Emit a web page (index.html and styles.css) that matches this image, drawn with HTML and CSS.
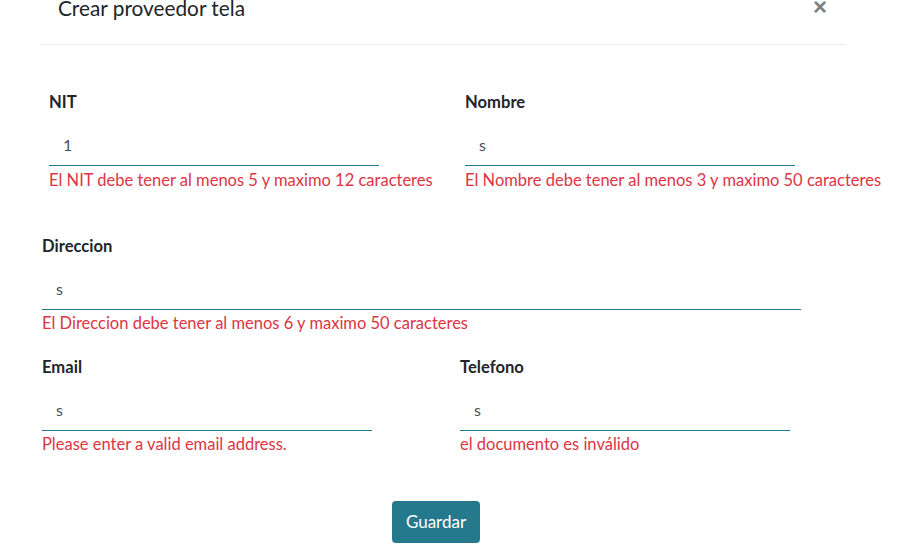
FILE: index.html
```html
<!DOCTYPE html>
<html lang="es">
<head>
<meta charset="utf-8">
<title>Crear proveedor tela</title>
<link rel="stylesheet" href="styles.css">
</head>
<body>
<div class="modal">
  <div class="modal-header">
    <h5 class="modal-title">Crear proveedor tela</h5>
    <button class="close" type="button" aria-label="Cerrar">&times;</button>
  </div>
  <form class="modal-body">
    <div class="row row-first">
      <div class="field field-half">
        <label class="label">NIT</label>
        <div class="input">1</div>
        <div class="error error-loose">El NIT debe tener al menos 5 y maximo 12 caracteres</div>
      </div>
      <div class="field field-half">
        <label class="label">Nombre</label>
        <div class="input">s</div>
        <div class="error error-loose">El Nombre debe tener al menos 3 y maximo 50 caracteres</div>
      </div>
    </div>
    <div class="row row-second">
      <div class="field field-full">
        <label class="label">Direccion</label>
        <div class="input">s</div>
        <div class="error">El Direccion debe tener al menos 6 y maximo 50 caracteres</div>
      </div>
    </div>
    <div class="row row-third">
      <div class="field field-half">
        <label class="label">Email</label>
        <div class="input">s</div>
        <div class="error">Please enter a valid email address.</div>
      </div>
      <div class="field field-half">
        <label class="label">Telefono</label>
        <div class="input">s</div>
        <div class="error">el documento es inválido</div>
      </div>
    </div>
    <div class="actions">
      <button class="btn" type="button">Guardar</button>
    </div>
  </form>
</div>
</body>
</html>
```
FILE: styles.css
```css
* { box-sizing: border-box; }
html, body {
  margin: 0;
  background: #ffffff;
  font-family: "Lato", "Liberation Sans", sans-serif;
  color: #212529;
}
.modal {
  width: 913px;
  height: 554px;
  overflow: hidden;
}
.modal-header {
  display: flex;
  justify-content: space-between;
  align-items: flex-start;
  margin: 0 67px 0 40px;
  padding: 0 19px 0 18px;
  height: 45px;
  border-bottom: 1px solid #e9ecef;
}
.modal-title {
  margin: 0;
  font-size: 20.8px;
  font-weight: 400;
  line-height: 16px;
}
.close {
  border: 0;
  background: transparent;
  padding: 0;
  margin-top: 0;
  font-family: "Liberation Sans", sans-serif;
  font-size: 24px;
  font-weight: 700;
  line-height: 13px;
  height: 13px;
  color: #000;
  opacity: .5;
}
.modal-body {
  padding-top: 45px;
}
.row {
  display: flex;
}
.row-first { padding-left: 49px; gap: 86px; }
.row-second { padding-left: 42px; margin-top: 42px; }
.row-third { padding-left: 42px; margin-top: 20px; gap: 88px; }
.field-half { width: 330px; }
.field-full { width: 759px; }
.label {
  display: block;
  font-size: 16.6px;
  font-weight: 700;
  line-height: 24px;
  margin-bottom: 11px;
}
.input {
  height: 41px;
  padding: 8px 14px 0;
  font-size: 16px;
  line-height: 24px;
  color: #495057;
  border-bottom: 1px solid #1f7a8c;
}
.error {
  margin-top: 1px;
  font-size: 16.5px;
  line-height: 24px;
  color: #dc3545;
  white-space: nowrap;
}
.error-loose { margin-top: 2px; }
.actions {
  display: flex;
  justify-content: center;
  padding-right: 41px;
  margin-top: 45px;
}
.btn {
  width: 88px;
  height: 42px;
  border: 0;
  border-radius: 4px;
  background: #247a8c;
  color: #fff;
  font-family: "Lato", "Liberation Sans", sans-serif;
  font-size: 17px;
  line-height: 24px;
}
```
